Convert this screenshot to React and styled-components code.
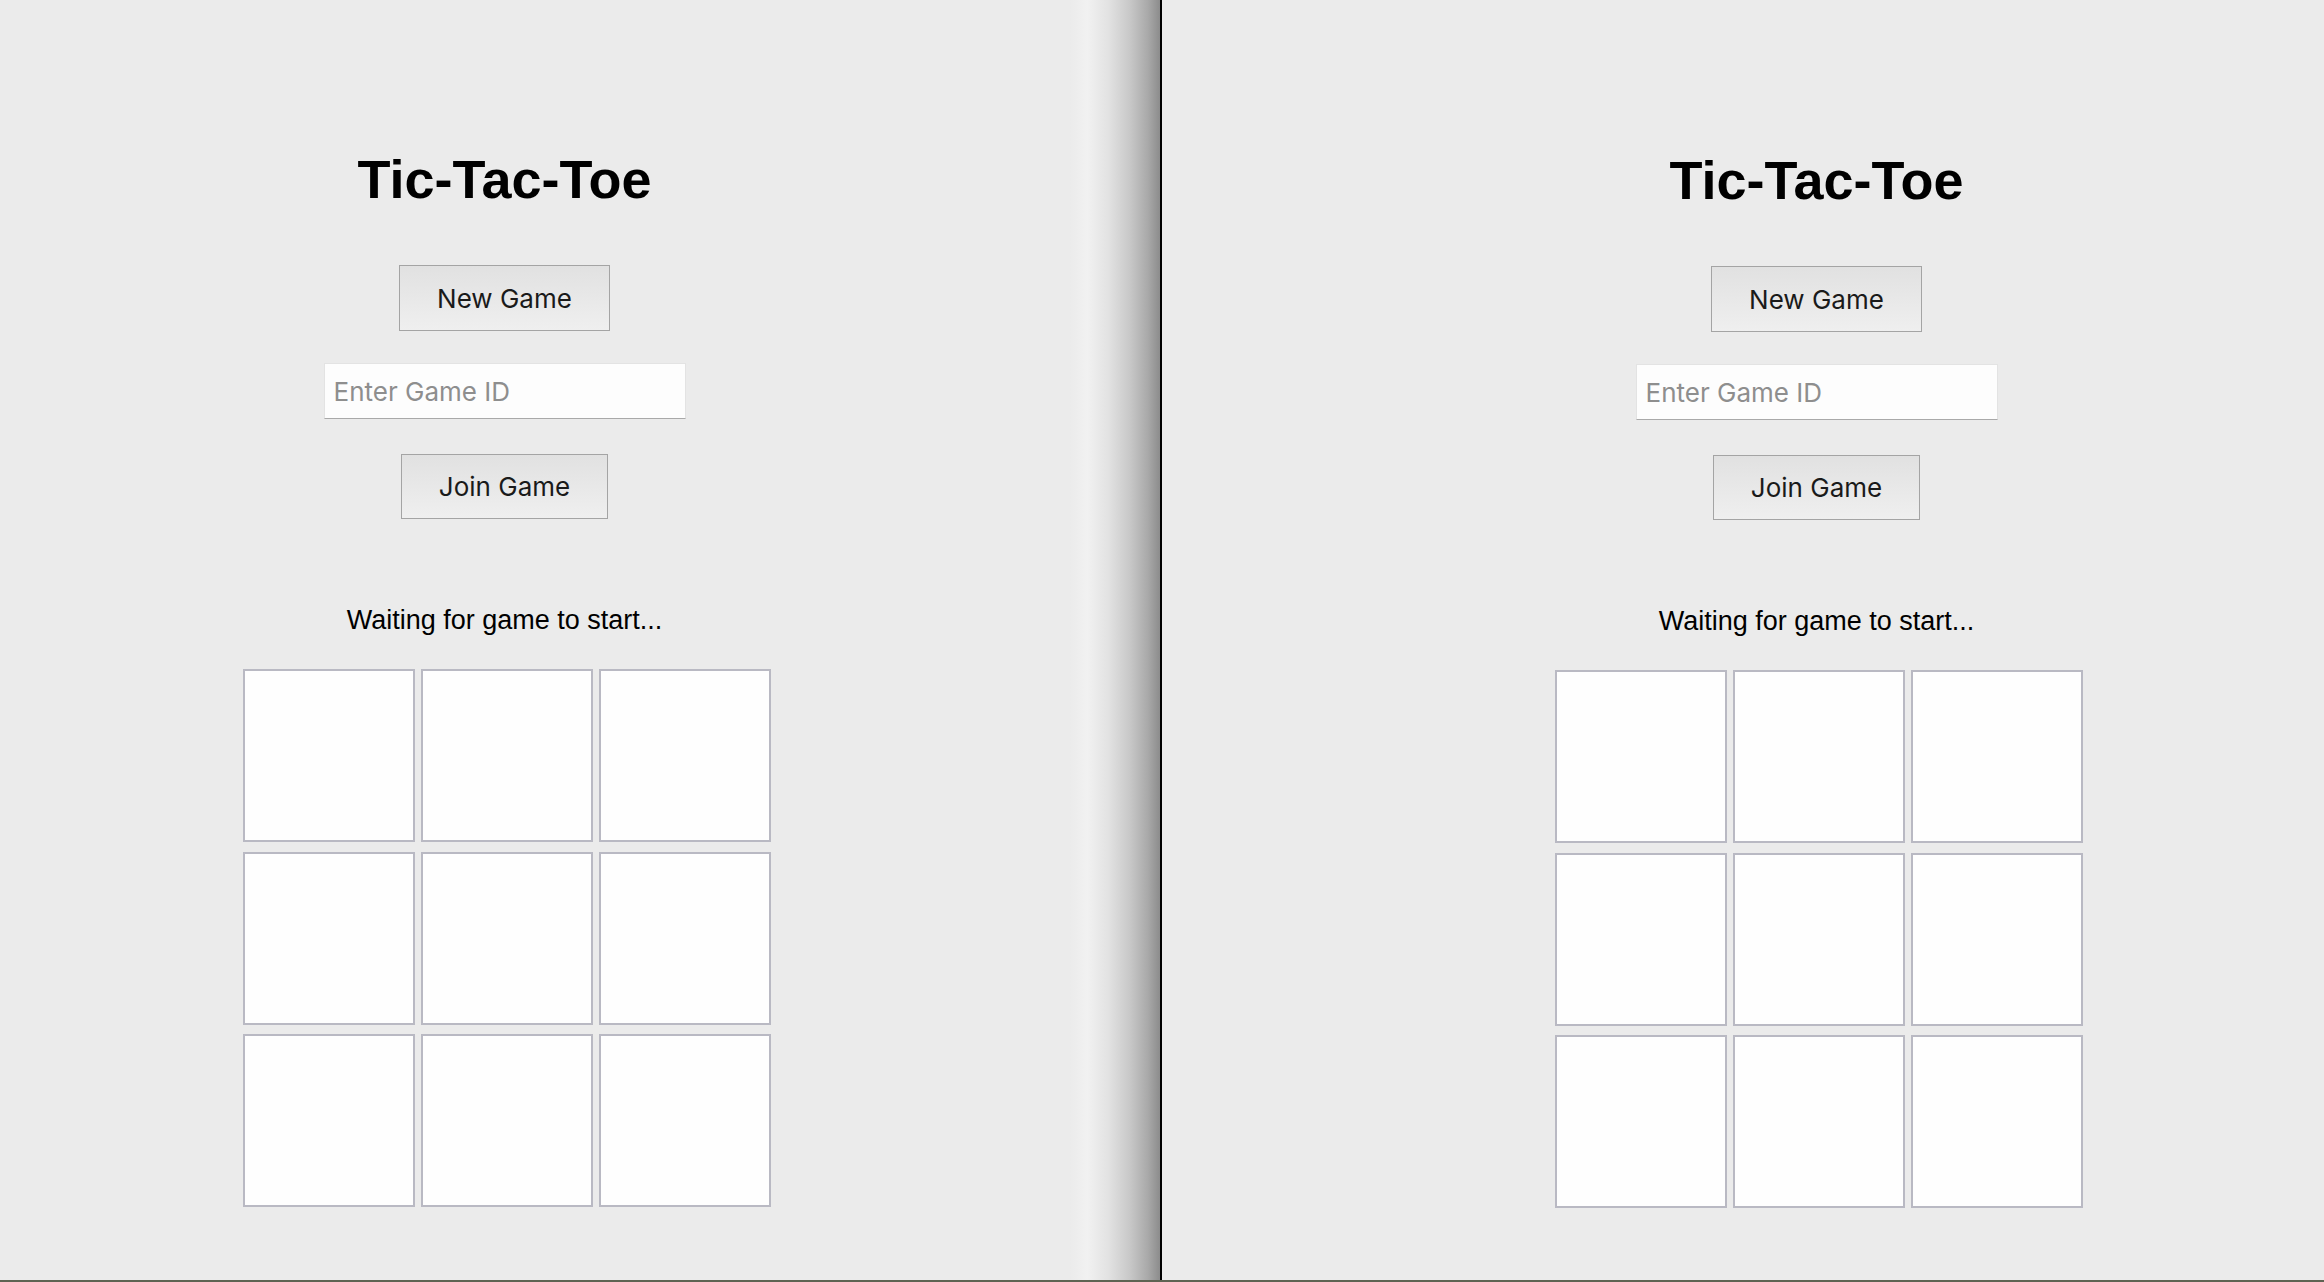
import React from 'react'
import styled, { createGlobalStyle } from 'styled-components'

const GlobalStyle = createGlobalStyle`
  html, body {
    margin: 0;
    padding: 0;
    background: #ebebeb;
  }
  * {
    box-sizing: border-box;
  }
`

const Screen = styled.div`
  display: flex;
  width: 2324px;
  height: 1282px;
  overflow: hidden;
  background: #ebebeb;
  border-bottom: 2px solid #5e6352;
`

const LeftPane = styled.div`
  display: flex;
  width: 1160px;
  flex-shrink: 0;
`

const PaneShadow = styled.div`
  flex: 1;
  background: linear-gradient(
    to right,
    #ebebeb 0%,
    #ebebeb 40%,
    #f1f1f1 52%,
    #e2e2e2 66%,
    #c8c8c8 80%,
    #a9a9a9 92%,
    #8c8c8c 100%
  );
`

const Divider = styled.div`
  width: 2px;
  flex-shrink: 0;
  background: #000;
`

const RightPane = styled.div`
  flex: 1;
  display: flex;
  overflow: hidden;
`

const Page = styled.div`
  width: ${p => p.$width}px;
  flex-shrink: 0;
  display: flex;
  flex-direction: column;
  align-items: center;
  padding-top: ${p => p.$top}px;
`

const Title = styled.h1`
  margin: 0;
  font-family: "Liberation Sans", Arial, sans-serif;
  font-weight: 700;
  font-size: 54px;
  line-height: 54px;
  color: #000;
`

const ActionButton = styled.button`
  margin-top: ${p => p.$gap}px;
  width: ${p => p.$w}px;
  height: ${p => p.$h}px;
  padding: 0;
  border: 1px solid #a4a4a4;
  border-radius: 0;
  background: linear-gradient(#e1e1e1, #efefef);
  font-family: Inter, "Noto Sans", sans-serif;
  font-size: 26px;
  color: #1a1a1a;
  cursor: pointer;
`

const GameIdInput = styled.input`
  margin-top: 32px;
  width: 362px;
  height: 56px;
  padding: 0 9px;
  border: 1px solid #e3e3e3;
  border-bottom-color: #a9a9a9;
  border-radius: 0;
  background: #fdfdfd;
  font-family: Inter, "Noto Sans", sans-serif;
  font-size: 26px;
  color: #1a1a1a;
  outline: none;
  &::placeholder {
    color: #8e8e8e;
  }
`

const Status = styled.p`
  margin: 88px 0 0;
  font-family: "Liberation Sans", Arial, sans-serif;
  font-size: 27px;
  line-height: 27px;
  color: #000;
`

const Board = styled.div`
  margin-top: 35px;
  margin-left: 4px;
  display: grid;
  grid-template-columns: repeat(3, 172px);
  grid-auto-rows: 173px;
  column-gap: 6px;
  row-gap: 9.5px;
`

const Cell = styled.div`
  border: 2px solid #b9b9c3;
  background: #fefefe;
`

function GamePage({ width, top }) {
  return (
    <Page $width={width} $top={top}>
      <Title>Tic-Tac-Toe</Title>
      <ActionButton $gap={59} $w={211} $h={66}>New Game</ActionButton>
      <GameIdInput placeholder="Enter Game ID" />
      <ActionButton $gap={35} $w={207} $h={65}>Join Game</ActionButton>
      <Status>Waiting for game to start...</Status>
      <Board>
        {Array.from({ length: 9 }).map((_, i) => (
          <Cell key={i} />
        ))}
      </Board>
    </Page>
  )
}

export default function App() {
  return (
    <>
      <GlobalStyle />
      <Screen>
        <LeftPane>
          <GamePage width={1009} top={152} />
          <PaneShadow />
        </LeftPane>
        <Divider />
        <RightPane>
          <GamePage width={1309} top={153} />
        </RightPane>
      </Screen>
    </>
  )
}
